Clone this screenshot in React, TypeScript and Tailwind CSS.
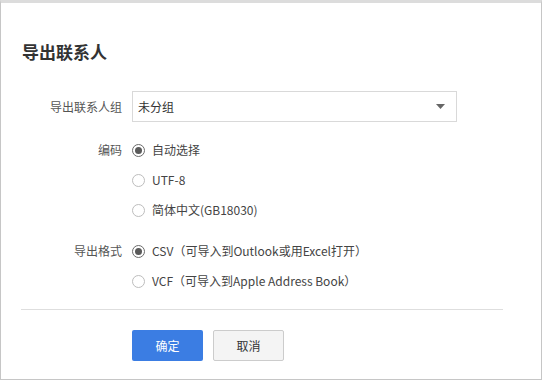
import { type ReactNode } from 'react'

// Diálogo "导出联系人" — exportar contactos

const font = { fontFamily: '"Noto Sans CJK SC", "Noto Sans", sans-serif' }

function Radio({ checked, children }: { checked?: boolean; children: ReactNode }) {
  return (
    <label className="flex h-[30px] items-center">
      <span
        className={[
          'flex h-[13px] w-[13px] items-center justify-center rounded-full border bg-white',
          checked ? 'border-[#6b6b6b]' : 'border-[#bdbdbd]',
        ].join(' ')}
      >
        {checked && <span className="h-[7px] w-[7px] rounded-full bg-[#5a5a5a]" />}
      </span>
      <span className="ml-[7px] text-[12px] text-[#444]">{children}</span>
    </label>
  )
}

function Row({ label, children }: { label?: string; children: ReactNode }) {
  return (
    <div className="flex">
      <div className="flex h-[30px] w-[100px] shrink-0 items-center justify-end text-[12px] text-[#555]">
        {label}
      </div>
      <div className="ml-[10px]">{children}</div>
    </div>
  )
}

export default function App() {
  return (
    <div
      className="box-border h-[380px] w-[542px] border border-t-[3px] border-[#c6c6c6] border-t-[#dcdcdc] bg-white"
      style={font}
    >
      <div className="px-[21px] pt-[37px]">
        <h1 className="text-[17px] font-bold leading-[24px] text-[#333]">导出联系人</h1>

        <div className="mt-[27px] flex items-center">
          <div className="w-[100px] text-right text-[12px] text-[#555]">导出联系人组</div>
          <div className="ml-[10px] flex h-[31px] w-[325px] items-center justify-between border border-[#d9d9d9] px-[5px]">
            <span className="text-[12px] text-[#333]">未分组</span>
            <svg width="9" height="5" viewBox="0 0 9 5" className="mr-[6px]">
              <path d="M0 0h9L4.5 5z" fill="#666" />
            </svg>
          </div>
        </div>

        <div className="mt-[13px]">
          <Row label="编码">
            <Radio checked>自动选择</Radio>
          </Row>
          <Row>
            <Radio>UTF-8</Radio>
          </Row>
          <Row>
            <Radio>简体中文(GB18030)</Radio>
          </Row>
        </div>

        <div className="mt-[11px]">
          <Row label="导出格式">
            <Radio checked>CSV（可导入到Outlook或用Excel打开）</Radio>
          </Row>
          <Row>
            <Radio>VCF（可导入到Apple Address Book）</Radio>
          </Row>
        </div>

        <div className="-ml-px mt-[13px] h-px w-[482px] bg-[#dedede]" />

        <div className="ml-[110px] mt-[20px] flex gap-[10px]">
          <button className="h-[31px] w-[71px] rounded-[2px] bg-[#3b7de3] text-[12px] text-white">
            确定
          </button>
          <button className="h-[31px] w-[71px] rounded-[2px] border border-[#cccccc] bg-[#f4f4f4] text-[12px] text-[#333]">
            取消
          </button>
        </div>
      </div>
    </div>
  )
}
